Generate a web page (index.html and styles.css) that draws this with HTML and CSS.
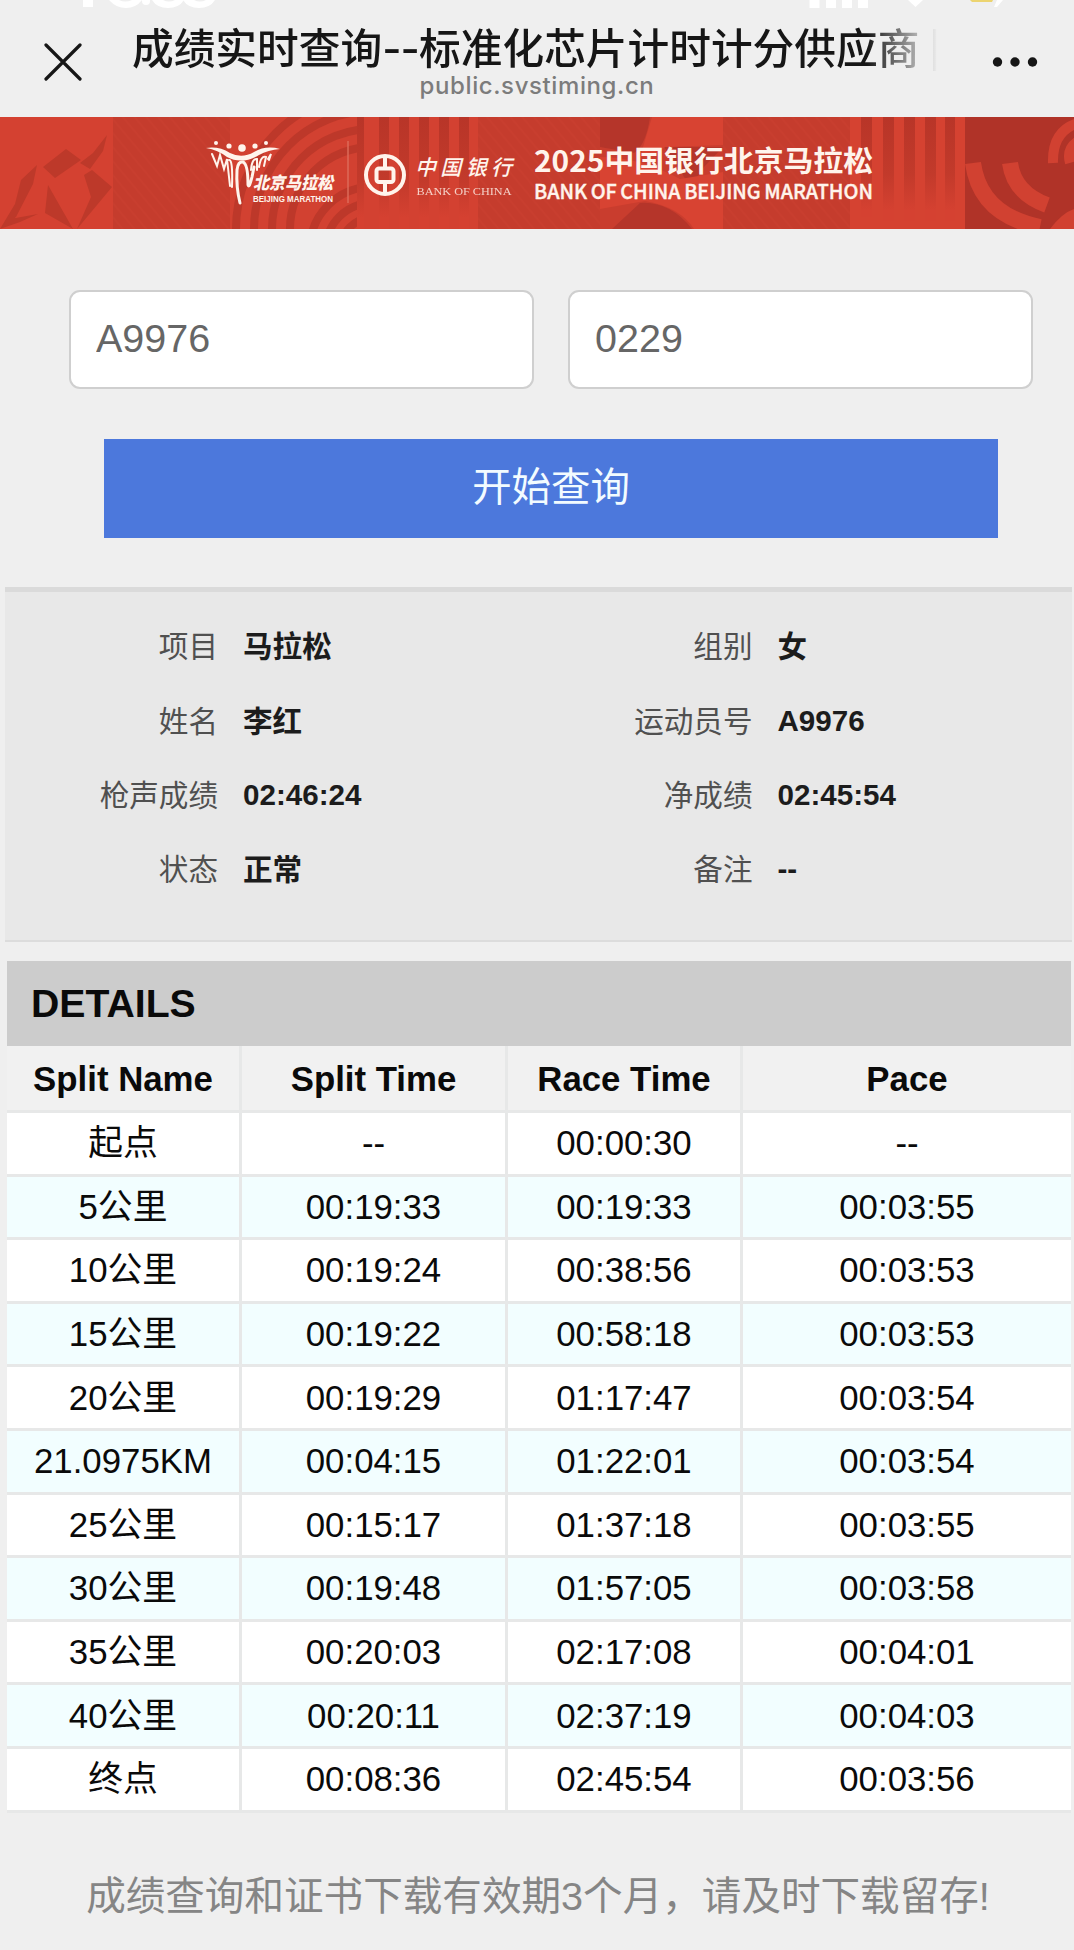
FILE: index.html
```html
<!DOCTYPE html>
<html lang="zh-CN">
<head>
    <meta charset="UTF-8">
    <meta name="viewport" content="width=device-width, initial-scale=1.0">
    <title>成绩实时查询--标准化芯片计时计分供应商</title>
    <link rel="stylesheet" href="styles.css">
</head>
<body>
    <!-- phone status icons, mostly scrolled off the top -->
    <svg class="status-bar" width="1074" height="9" viewBox="0 0 1074 9" aria-hidden="true">
        <g fill="#fff">
            <path d="M83 0h10v7h-10z"/>
            <path d="M109 0h10q6 3 13 0h10q-6 8-16 8t-17-8z"/>
            <circle cx="146" cy="1" r="4"/>
            <path d="M152 0h11q6 3 12 0h9q-5 8-16 8t-16-8z"/>
            <path d="M183 0h11q6 3 12 0h9q-5 8-16 8t-16-8z"/>
            <path d="M809.500 0h10v8h-10zM826 0h10v8h-10zM842 0h10v8h-10zM858 0h10v8h-10z"/>
            <path d="M908 0h15l-7.500 7z"/>
            <path d="M997 0h6l-6 7h-3z"/>
        </g>
        <path fill="#ecd470" d="M970 0h23l-1 2h-20z"/>
    </svg>

    <div class="navbar">
        <svg class="nav-close" width="38" height="38" viewBox="0 0 38 38">
            <path d="M2 2L36 36M36 2L2 36" fill="none" stroke="#161616" stroke-width="3.200" stroke-linecap="round"/>
        </svg>
        <div class="nav-center">
            <div class="nav-title">成绩实时查询<span class="dashes">--</span>标准化芯片计时计分供应商 |</div>
            <div class="nav-url">public.svstiming.cn</div>
        </div>
        <svg class="nav-more" width="46" height="12" viewBox="0 0 46 12">
            <circle cx="5.500" cy="6" r="4.700"/>
            <circle cx="23" cy="6" r="4.700"/>
            <circle cx="40.500" cy="6" r="4.700"/>
        </svg>
    </div>

    <svg class="banner" width="1074" height="112" viewBox="0 0 1074 112">
        <defs>
            <pattern id="hatch" width="9" height="9" patternUnits="userSpaceOnUse" patternTransform="rotate(-40)">
                <path d="M4 0V9" stroke="#d14433" stroke-width="1" opacity=".5"/>
            </pattern>
            <linearGradient id="fade" x1="0" y1="0" x2="0" y2="1">
                <stop offset="0" stop-color="#b83528"/>
                <stop offset=".55" stop-color="#c23a2b"/>
                <stop offset=".9" stop-color="#d54131"/>
            </linearGradient>
            <clipPath id="arcs"><path d="M230 0H357V112H230z"/></clipPath>
            <clipPath id="rings"><path d="M965 0H1074V112H965z"/></clipPath>
        </defs>
        <rect width="1074" height="112" fill="#c53c2d"/>

        <!-- folded paper bird -->
        <rect width="113" height="112" fill="#d44131"/>
        <path fill="#bd392a" d="M66 32L81 43 55 61 43 50zM107 18L103 34 90 52 80 46 93 36zM37 48L33 67 16 100 0 112 15 87 21 63zM48 68L73 112 45 96zM92 53L112 70 77 112 91 80 84 58zM0 112L10 102 38 97 20 105z"/>
        <rect x="113" width="117" height="112" fill="url(#hatch)"/>

        <!-- arcs -->
        <g clip-path="url(#arcs)">
            <rect x="230" width="127" height="112" fill="#d24131"/>
            <g fill="none" stroke="#bd382a" stroke-width="8">
                <circle cx="372" cy="112" r="136"/>
                <circle cx="372" cy="112" r="118"/>
                <circle cx="372" cy="112" r="100"/>
                <circle cx="372" cy="112" r="82"/>
                <circle cx="372" cy="132" r="62"/>
                <circle cx="372" cy="132" r="46"/>
                <circle cx="372" cy="132" r="31"/>
            </g>
        </g>
        <path d="M348 24V86" stroke="#dd6a58" stroke-width="1.500"/>

        <!-- stripes -->
        <rect x="357" width="121" height="112" fill="#d34131"/>
        <path fill="url(#fade)" d="M357 0h7v112h-7zM379 0h10v112h-10zM399 0h10v112h-10zM419 0h10v112h-10zM439 0h10v112h-10zM459 0h10v112h-10z"/>
        <rect x="478" width="122" height="112" fill="url(#hatch)"/>

        <rect x="600" width="123" height="112" fill="#c93d2e"/>
        <path fill="#b5352a" d="M600 0H650Q646 28 634 36L600 30zM664 30H723L704 50Q690 75 682 56zM640 86Q670 84 692 112H612z"/>
        <path fill="#d84332" d="M652 0H723V28L665 30Q656 40 640 40zM600 40Q640 40 680 62L723 55V112H694Q680 90 645 84L600 92z"/>
        <rect x="723" width="127" height="112" fill="url(#hatch)"/>

        <rect x="850" width="115" height="112" fill="#d54231"/>
        <path fill="url(#fade)" d="M861 0h11v100h-11zM883 0h11v104h-11zM904 0h11v104h-11zM925 0h11v104h-11zM945 0h10v104h-10z"/>

        <!-- rings -->
        <g clip-path="url(#rings)">
            <rect x="965" width="109" height="112" fill="#b03328"/>
            <g fill="none" stroke="#d14131">
                <path d="M973 46Q980 98 1040 110" stroke-width="16"/>
                <path d="M1010 46Q1014 76 1047 88" stroke-width="16"/>
                <path d="M1053 46Q1052 14 1078 6M1070 46Q1066 32 1078 24" stroke-width="10"/>
            </g>
            <path fill="#d14131" d="M1050 112Q1062 96 1074 92V112z"/>
        </g>

        <!-- runners logo -->
        <g fill="#fff4ec">
            <circle cx="216" cy="26" r="2"/>
            <circle cx="229" cy="29" r="2.600"/>
            <circle cx="242" cy="31" r="3.800"/>
            <circle cx="255" cy="29" r="2.600"/>
            <circle cx="266" cy="26" r="2"/>
            <path d="M206 31Q219 29 230 36Q242 42 254 35Q266 28 280 32Q268 33 259 38Q242 48 227 40Q218 33 206 31z"/>
        </g>
        <g fill="none" stroke="#fff4ec" stroke-width="2" stroke-linecap="round">
            <path d="M212 37L217 49 220 38 224 52 227 42 230 69M229 43Q233 42 232 70"/>
            <path d="M240 86Q236 70 237 53Q238 44 243 45Q248 47 248 68Q249 72 252 60L254 50" stroke-width="3"/>
            <path d="M251 53Q252 41 257 42L257 53M259 50Q261 38 266 40L264 49M268 42L271 37 269 43"/>
        </g>
        <text class="brand-cn" x="253" y="72" textLength="80" lengthAdjust="spacingAndGlyphs">北京马拉松</text>
        <text class="brand-en" x="253" y="84.500" textLength="80" lengthAdjust="spacingAndGlyphs">BEIJING MARATHON</text>

        <!-- bank logo -->
        <g fill="none" stroke="#fff4ec" stroke-width="4">
            <circle cx="385" cy="58" r="19"/>
            <rect x="376.500" y="51.500" width="17" height="13.500" rx="2.500"/>
            <path d="M385 39V51M385 65V77"/>
        </g>
        <text class="bank-cn" x="415" y="58" textLength="97">中国银行</text>
        <text class="bank-en" x="416.500" y="77.500" textLength="95" lengthAdjust="spacingAndGlyphs">BANK OF CHINA</text>

        <text class="event-cn" x="534" y="55" textLength="339" lengthAdjust="spacingAndGlyphs">2025中国银行北京马拉松</text>
        <text class="event-en" x="534" y="82" textLength="339" lengthAdjust="spacingAndGlyphs">BANK OF CHINA BEIJING MARATHON</text>
    </svg>

    <div class="search-form">
        <div class="search-fields">
            <input class="field" type="text" value="A9976">
            <input class="field" type="text" value="0229">
        </div>
        <button class="search-btn">开始查询</button>
    </div>

    <div class="info-panel">
        <span class="info-label">项目</span><span class="info-value cn">马拉松</span>
        <span class="info-label">组别</span><span class="info-value cn">女</span>
        <span class="info-label">姓名</span><span class="info-value cn">李红</span>
        <span class="info-label">运动员号</span><span class="info-value">A9976</span>
        <span class="info-label">枪声成绩</span><span class="info-value">02:46:24</span>
        <span class="info-label">净成绩</span><span class="info-value">02:45:54</span>
        <span class="info-label">状态</span><span class="info-value cn">正常</span>
        <span class="info-label">备注</span><span class="info-value">--</span>
    </div>

    <div class="details">
        <h2 class="details-title">DETAILS</h2>
        <table class="splits">
            <colgroup>
                <col class="col-name">
                <col class="col-split">
                <col class="col-race">
                <col>
            </colgroup>
            <thead>
                <tr><th>Split Name</th><th>Split Time</th><th>Race Time</th><th>Pace</th></tr>
            </thead>
            <tbody>
                <tr><td>起点</td><td>--</td><td>00:00:30</td><td>--</td></tr>
                <tr><td>5公里</td><td>00:19:33</td><td>00:19:33</td><td>00:03:55</td></tr>
                <tr><td>10公里</td><td>00:19:24</td><td>00:38:56</td><td>00:03:53</td></tr>
                <tr><td>15公里</td><td>00:19:22</td><td>00:58:18</td><td>00:03:53</td></tr>
                <tr><td>20公里</td><td>00:19:29</td><td>01:17:47</td><td>00:03:54</td></tr>
                <tr><td>21.0975KM</td><td>00:04:15</td><td>01:22:01</td><td>00:03:54</td></tr>
                <tr><td>25公里</td><td>00:15:17</td><td>01:37:18</td><td>00:03:55</td></tr>
                <tr><td>30公里</td><td>00:19:48</td><td>01:57:05</td><td>00:03:58</td></tr>
                <tr><td>35公里</td><td>00:20:03</td><td>02:17:08</td><td>00:04:01</td></tr>
                <tr><td>40公里</td><td>00:20:11</td><td>02:37:19</td><td>00:04:03</td></tr>
                <tr><td>终点</td><td>00:08:36</td><td>02:45:54</td><td>00:03:56</td></tr>
            </tbody>
        </table>
    </div>

    <p class="footer-note">成绩查询和证书下载有效期3个月，请及时下载留存!</p>
</body>
</html>
```

FILE: styles.css
```css
* {
    box-sizing: border-box;
}
body {
    margin: 0;
    height: 1950px;
    overflow: hidden;
    background: #efefef;
    color: #0a0a0a;
    font-family: "Liberation Sans", "Noto Sans CJK SC", sans-serif;
}
.status-bar {
    display: block;
}

/* browser title bar */
.navbar {
    display: flex;
    justify-content: space-between;
    height: 108px;
    padding: 0 36px 0 44px;
}
.nav-close {
    margin-top: 34px;
}
.nav-more {
    margin-top: 47px;
    fill: #161616;
}
.nav-center {
    width: 810px;
    text-align: center;
}
.nav-title {
    height: 50px;
    line-height: 50px;
    margin-top: 12px;
    font-family: "Noto Sans CJK SC", sans-serif;
    font-size: 41.7px;
    font-weight: 500;
    text-align: left;
    white-space: nowrap;
    background: linear-gradient(90deg, #161616 735px, #efefef 806px);
    -webkit-background-clip: text;
    background-clip: text;
    color: transparent;
}
.dashes {
    font-family: Inter, sans-serif;
    letter-spacing: -0.8px;
}
.nav-url {
    line-height: 30px;
    font-family: Inter, sans-serif;
    font-size: 24px;
    font-weight: 500;
    letter-spacing: 0.6px;
    color: #7c7c7c;
}

.banner {
    display: block;
}
.banner text {
    fill: #fff4ec;
}
.brand-cn {
    font: italic 900 17px "Noto Sans CJK SC", sans-serif;
}
.brand-en {
    font: bold 8.5px "Liberation Sans", sans-serif;
}
.bank-cn {
    font: italic 500 21px "Noto Sans CJK SC", sans-serif;
}
.bank-en {
    font: 11px "Liberation Serif", serif;
    opacity: 0.8;
}
.event-cn {
    font: bold 29px "Noto Sans CJK SC", sans-serif;
}
.event-en {
    font: 500 20.5px "Noto Sans CJK SC", sans-serif;
    word-spacing: -1px;
    stroke: #fff4ec;
    stroke-width: 0.4px;
}

/* search form */
.search-form {
    padding: 61px 41px 0 69px;
}
.search-fields {
    display: flex;
    gap: 34px;
}
.field {
    flex: 1;
    min-width: 0;
    height: 99px;
    padding: 0 25px 3px;
    border: 2px solid #cfcfcf;
    border-radius: 11px;
    background: #fff;
    color: #666;
    font-family: inherit;
    font-size: 39.5px;
}
.search-btn {
    display: block;
    width: 894px;
    height: 99px;
    margin: 50px 0 0 35px;
    padding: 0 0 10px;
    border: none;
    background: #4c78dc;
    color: #f2fbff;
    font-family: inherit;
    font-size: 39.4px;
}

/* runner info */
.info-panel {
    display: grid;
    grid-template-columns: 213px 321.5px 213px 1fr;
    grid-auto-rows: 74.4px;
    align-items: center;
    height: 355px;
    margin: 49px 2px 0 5px;
    padding-top: 17px;
    border-top: 5px solid #dadada;
    border-bottom: 2px solid #dcdcdc;
    background: #e8e8e8;
    font-size: 29.6px;
}
.info-label {
    padding-bottom: 3px;
    color: #505050;
    text-align: right;
}
.info-value {
    padding-left: 25px;
    color: #1c1c1c;
    font-weight: bold;
}
.info-value.cn {
    padding-bottom: 3px;
}

/* split table */
.details {
    margin: 19px 3px 0 7px;
}
.details-title {
    height: 85px;
    margin: 0;
    padding-left: 24px;
    line-height: 85px;
    background: #ccc;
    font-size: 39.2px;
}
.splits {
    width: 100%;
    table-layout: fixed;
    border-spacing: 0;
    font-size: 34.8px;
}
.col-name {
    width: 235px;
}
.col-split {
    width: 266px;
}
.col-race {
    width: 235px;
}
.splits th,
.splits td {
    height: 63.6px;
    padding: 0;
    border-right: 3px solid #e7e8e8;
    border-bottom: 3px solid #e7e8e8;
    line-height: 44px;
    text-align: center;
}
.splits th {
    height: 67px;
    padding-top: 1px;
    background: #f1f1f1;
}
.splits td {
    background: #fff;
}
.splits tbody tr:nth-child(even) td {
    background: #f2feff;
}
.splits th:last-child,
.splits td:last-child {
    border-right: none;
}

.footer-note {
    margin: 54px 0 0 2px;
    line-height: 58px;
    color: #858585;
    font-size: 39.6px;
    text-align: center;
}
```
